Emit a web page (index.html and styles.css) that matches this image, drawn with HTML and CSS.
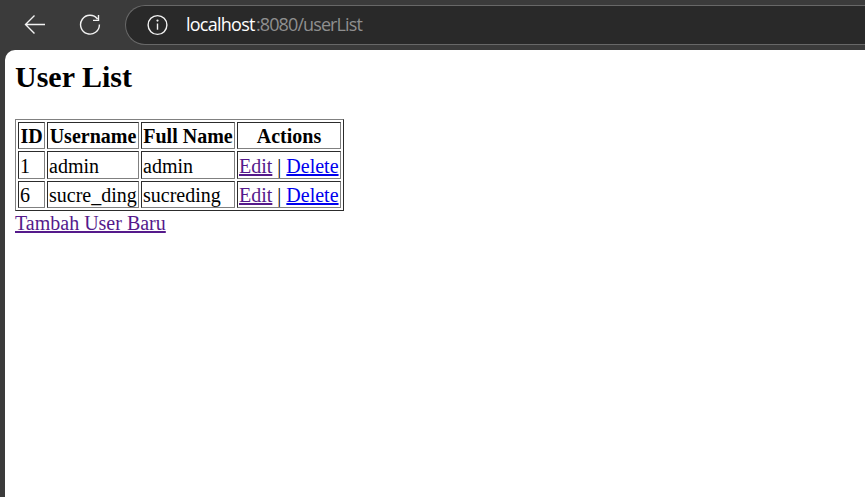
FILE: index.html
```html
<!DOCTYPE html>
<html lang="id">
<head>
<meta charset="utf-8">
<title>User List</title>
<link rel="stylesheet" href="styles.css">
</head>
<body>
<header class="toolbar">
  <svg class="back" width="22" height="22" viewBox="0 0 22 22"><path d="M21 11.5H1.5M10.5 2.5l-9 9 9 9"/></svg>
  <svg class="reload" width="22" height="22" viewBox="0 0 22 22"><path d="M20.4 10.6a9.4 9.4 0 1 1-1.9-5.6M19.5 1v5.4h-5.5"/></svg>
  <div class="address">
    <svg class="info" width="22" height="22" viewBox="0 0 22 22"><circle cx="11.5" cy="11" r="9.4"/><path d="M11.5 9.5v6.2"/><circle class="dot" cx="11.5" cy="6.6" r="1.1"/></svg>
    <div class="url"><span class="host">localhost</span><span class="path">:8080/userList</span></div>
  </div>
</header>
<main class="page">
  <h2>User List</h2>
  <table>
    <colgroup><col class="c-id"><col class="c-user"><col class="c-name"><col class="c-actions"></colgroup>
    <tr><th>ID</th><th>Username</th><th>Full Name</th><th>Actions</th></tr>
    <tr class="tall"><td>1</td><td>admin</td><td>admin</td><td><a class="visited" href="#">Edit</a> | <a href="#">Delete</a></td></tr>
    <tr><td>6</td><td>sucre_ding</td><td>sucreding</td><td><a class="visited" href="#">Edit</a> | <a href="#">Delete</a></td></tr>
  </table>
  <a class="visited add" href="#">Tambah User Baru</a>
</main>
</body>
</html>
```
FILE: styles.css
```css
* { box-sizing: border-box; }
body {
  margin: 0;
  height: 497px;
  overflow: hidden;
  display: flex;
  flex-direction: column;
  background: #3b3b3b;
}
.toolbar {
  flex: none;
  height: 50px;
  padding-top: 5px;
  display: flex;
  align-items: flex-start;
}
svg { flex: none; fill: none; stroke: #f2f2f2; stroke-width: 1.4; }
.back { margin: 8px 0 0 24px; }
.reload { margin: 9px 0 0 33px; }
.address {
  flex: 1;
  height: 40px;
  margin-left: 24px;
  display: flex;
  align-items: center;
  background: #292929;
  border: 1px solid #686868;
  border-right: 0;
  border-radius: 20px 0 0 20px;
}
.info { margin-left: 20px; }
.info .dot { fill: #f2f2f2; stroke: none; }
.url {
  display: flex;
  margin-left: 18px;
  padding-bottom: 2px;
  font: 18px/24px "Open Sans", sans-serif;
  white-space: nowrap;
}
.host { color: #fff; width: 70px; letter-spacing: -0.75px; }
.path { color: #8f8f8f; letter-spacing: -0.9px; }
.page {
  flex: 1;
  margin-left: 5px;
  padding: 10px 10px 0;
  background: #fff;
  border-top-left-radius: 10px;
  font: 20px/25px "Liberation Serif", serif;
  color: #000;
}
h2 { margin: 0 0 25px; font-size: 30px; line-height: 34px; }
table {
  width: 329px;
  table-layout: fixed;
  border: 1px solid;
  border-color: #808080 #2c2c2c #2c2c2c #808080;
  border-spacing: 2px;
}
.c-id { width: 27px; }
.c-user { width: 92px; }
.c-name { width: 94px; }
.c-actions { width: 104px; }
th, td {
  height: 27px;
  padding: 2px 1px 0;
  line-height: 23px;
  white-space: nowrap;
  border: 1px solid;
  border-color: #2c2c2c #808080 #808080 #2c2c2c;
}
.tall td { height: 28px; }
a { color: #0000ee; }
a.visited { color: #551a8b; }
```
